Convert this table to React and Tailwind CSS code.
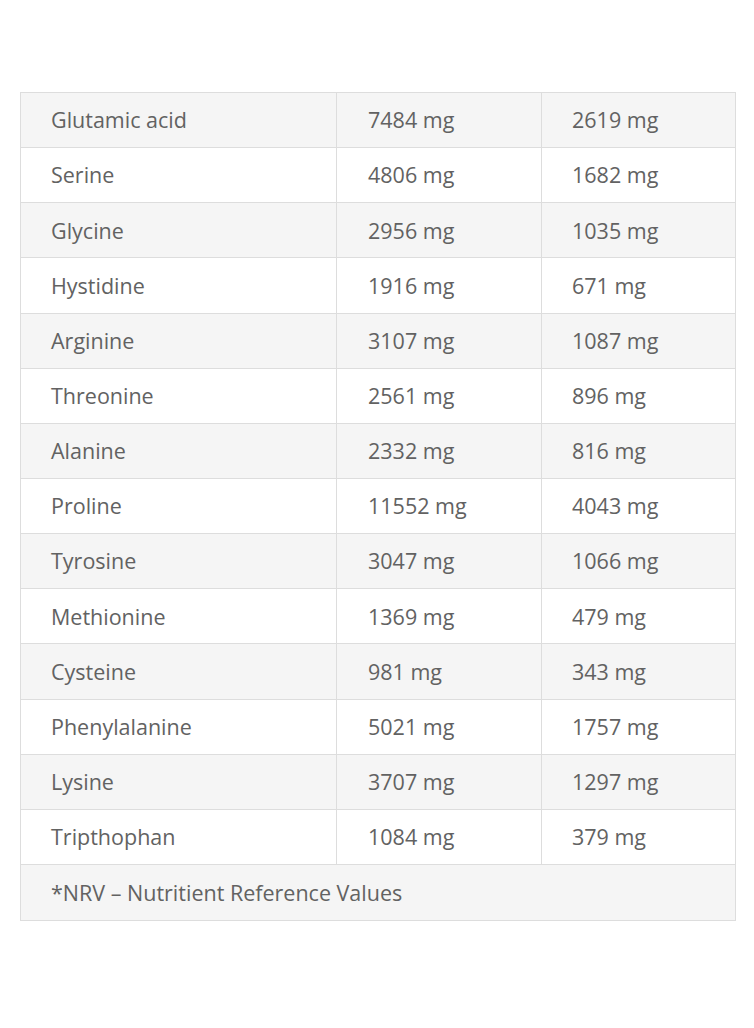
import React from "react";

const rows = [
  ["Glutamic acid", "7484 mg", "2619 mg"],
  ["Serine", "4806 mg", "1682 mg"],
  ["Glycine", "2956 mg", "1035 mg"],
  ["Hystidine", "1916 mg", "671 mg"],
  ["Arginine", "3107 mg", "1087 mg"],
  ["Threonine", "2561 mg", "896 mg"],
  ["Alanine", "2332 mg", "816 mg"],
  ["Proline", "11552 mg", "4043 mg"],
  ["Tyrosine", "3047 mg", "1066 mg"],
  ["Methionine", "1369 mg", "479 mg"],
  ["Cysteine", "981 mg", "343 mg"],
  ["Phenylalanine", "5021 mg", "1757 mg"],
  ["Lysine", "3707 mg", "1297 mg"],
  ["Tripthophan", "1084 mg", "379 mg"],
];

const App = () => {
  return (
    <div className="bg-white w-[754px] h-[1028px] pt-[92px] pl-[20px] font-['Open_Sans',sans-serif] text-[#626262]">
      <table className="w-[715px] border-collapse border border-[#ddd] table-fixed">
        <colgroup>
          <col className="w-[316px]" />
          <col className="w-[205px]" />
          <col className="w-[194px]" />
        </colgroup>
        <tbody>
          {rows.map((r, i) => (
            <tr key={r[0]} className={`h-[55.15px] ${i % 2 === 0 ? "bg-[#f5f5f5]" : "bg-white"}`}>
              <td className="border border-[#ddd] pl-[30px] text-[21.5px] leading-none">{r[0]}</td>
              <td className="border border-[#ddd] pl-[31px] text-[21.5px] leading-none">{r[1]}</td>
              <td className="border border-[#ddd] pl-[30px] text-[21.5px] leading-none">{r[2]}</td>
            </tr>
          ))}
          <tr className="h-[56px] bg-[#f5f5f5]">
            <td colSpan="3" className="border border-[#ddd] pl-[30px] text-[21.5px] leading-none">
              *NRV – Nutritient Reference Values
            </td>
          </tr>
        </tbody>
      </table>
    </div>
  );
};

export default App;
